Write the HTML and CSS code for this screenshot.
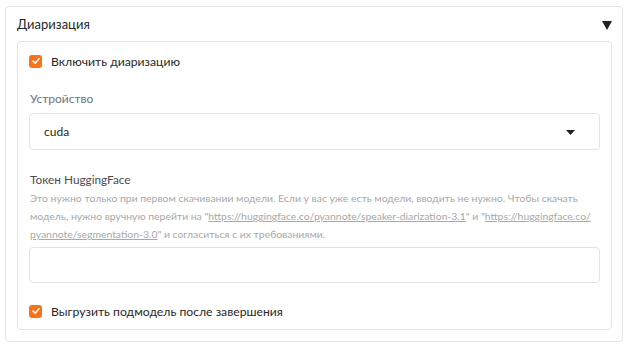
FILE: index.html
```html
<!DOCTYPE html>
<html lang="ru">
<head>
    <meta charset="UTF-8">
    <title>Диаризация</title>
    <link rel="stylesheet" href="styles.css">
</head>
<body>
<div class="accordion">
    <div class="accordion-head">
        <span class="accordion-title">Диаризация</span>
        <svg class="accordion-arrow" width="10" height="9" viewBox="0 0 10 9"><polygon points="0,0 10,0 5,9" fill="#222"/></svg>
    </div>
    <div class="panel">
        <label class="check-row">
            <span class="check-box">
                <svg width="10" height="10" viewBox="0 0 10 10"><polyline points="2,5.2 4.2,7.2 8,2.8" fill="none" stroke="#fff" stroke-width="1.6" stroke-linecap="round" stroke-linejoin="round"/></svg>
            </span>
            <span class="check-text">Включить диаризацию</span>
        </label>

        <div class="field field-device">
            <div class="field-label">Устройство</div>
            <div class="select">
                <span>cuda</span>
                <svg width="9" height="5" viewBox="0 0 9 5"><polygon points="0,0 9,0 4.5,5" fill="#222"/></svg>
            </div>
        </div>

        <div class="field field-token">
            <div class="field-label dark">Токен HuggingFace</div>
            <div class="field-info">
                Это нужно только при первом скачивании модели. Если у вас уже есть модели, вводить не нужно. Чтобы скачать<br>
                модель, нужно вручную перейти на "<a href="#">https://huggingface.co/pyannote/speaker-diarization-3.1</a>" и "<a href="#">https://huggingface.co/<br>pyannote/segmentation-3.0</a>" и согласиться с их требованиями.
            </div>
            <div class="text-input"></div>
        </div>

        <label class="check-row check-last">
            <span class="check-box">
                <svg width="10" height="10" viewBox="0 0 10 10"><polyline points="2,5.2 4.2,7.2 8,2.8" fill="none" stroke="#fff" stroke-width="1.6" stroke-linecap="round" stroke-linejoin="round"/></svg>
            </span>
            <span class="check-text">Выгрузить подмодель после завершения</span>
        </label>
    </div>
</div>
</body>
</html>
```

FILE: styles.css
```css
/* page */
body {
    margin: 0;
    padding: 6px 8px 0 5px;
    background: #ffffff;
    font-family: Lato, "Noto Sans", sans-serif;
    color: #27272a;
}

/* accordion */
.accordion {
    border: 1px solid #e4e4e7;
    border-radius: 4px;
    height: 336px;
    box-sizing: border-box;
    padding: 0 10px 11px 11px;
    display: flex;
    flex-direction: column;
}

.accordion-head {
    display: flex;
    justify-content: space-between;
    align-items: center;
    height: 34px;
}

.accordion-title {
    font-size: 13px;
}

.accordion-arrow {
    margin-top: 2px;
}

.panel {
    flex: 1;
    border: 1px solid #e4e4e7;
    border-radius: 4px;
    padding: 9px 11px 0 11px;
    display: flex;
    flex-direction: column;
}

/* checkbox */
.check-row {
    display: flex;
    align-items: center;
    gap: 9px;
    height: 20px;
}

.check-box {
    width: 13px;
    height: 13px;
    border-radius: 3px;
    background: #f97316;
    display: flex;
    align-items: center;
    justify-content: center;
}

.check-text {
    font-size: 12.2px;
}

.check-last {
    margin-top: 18px;
}

/* fields */
.field-device {
    margin-top: 19px;
}

.field-token {
    margin-top: 21px;
}

.field-label {
    font-size: 12px;
    line-height: 18px;
    color: #6b7280;
    padding-left: 1px;
}

.field-label.dark {
    font-size: 11.8px;
    color: #4b4b4b;
}

.select {
    margin-top: 5px;
    height: 37px;
    box-sizing: border-box;
    border: 1px solid #e4e4e7;
    border-radius: 4px;
    display: flex;
    align-items: center;
    justify-content: space-between;
    padding: 0 24px 0 14px;
    font-size: 12px;
}

.select svg {
    margin-top: 2px;
}

.field-info {
    font-size: 10.4px;
    line-height: 18px;
    color: #a8a8a8;
    white-space: nowrap;
    padding-left: 1px;
}

.field-info a {
    color: #a8a8a8;
}

.text-input {
    margin-top: 4px;
    height: 36px;
    box-sizing: border-box;
    border: 1px solid #e4e4e7;
    border-radius: 4px;
}
```
